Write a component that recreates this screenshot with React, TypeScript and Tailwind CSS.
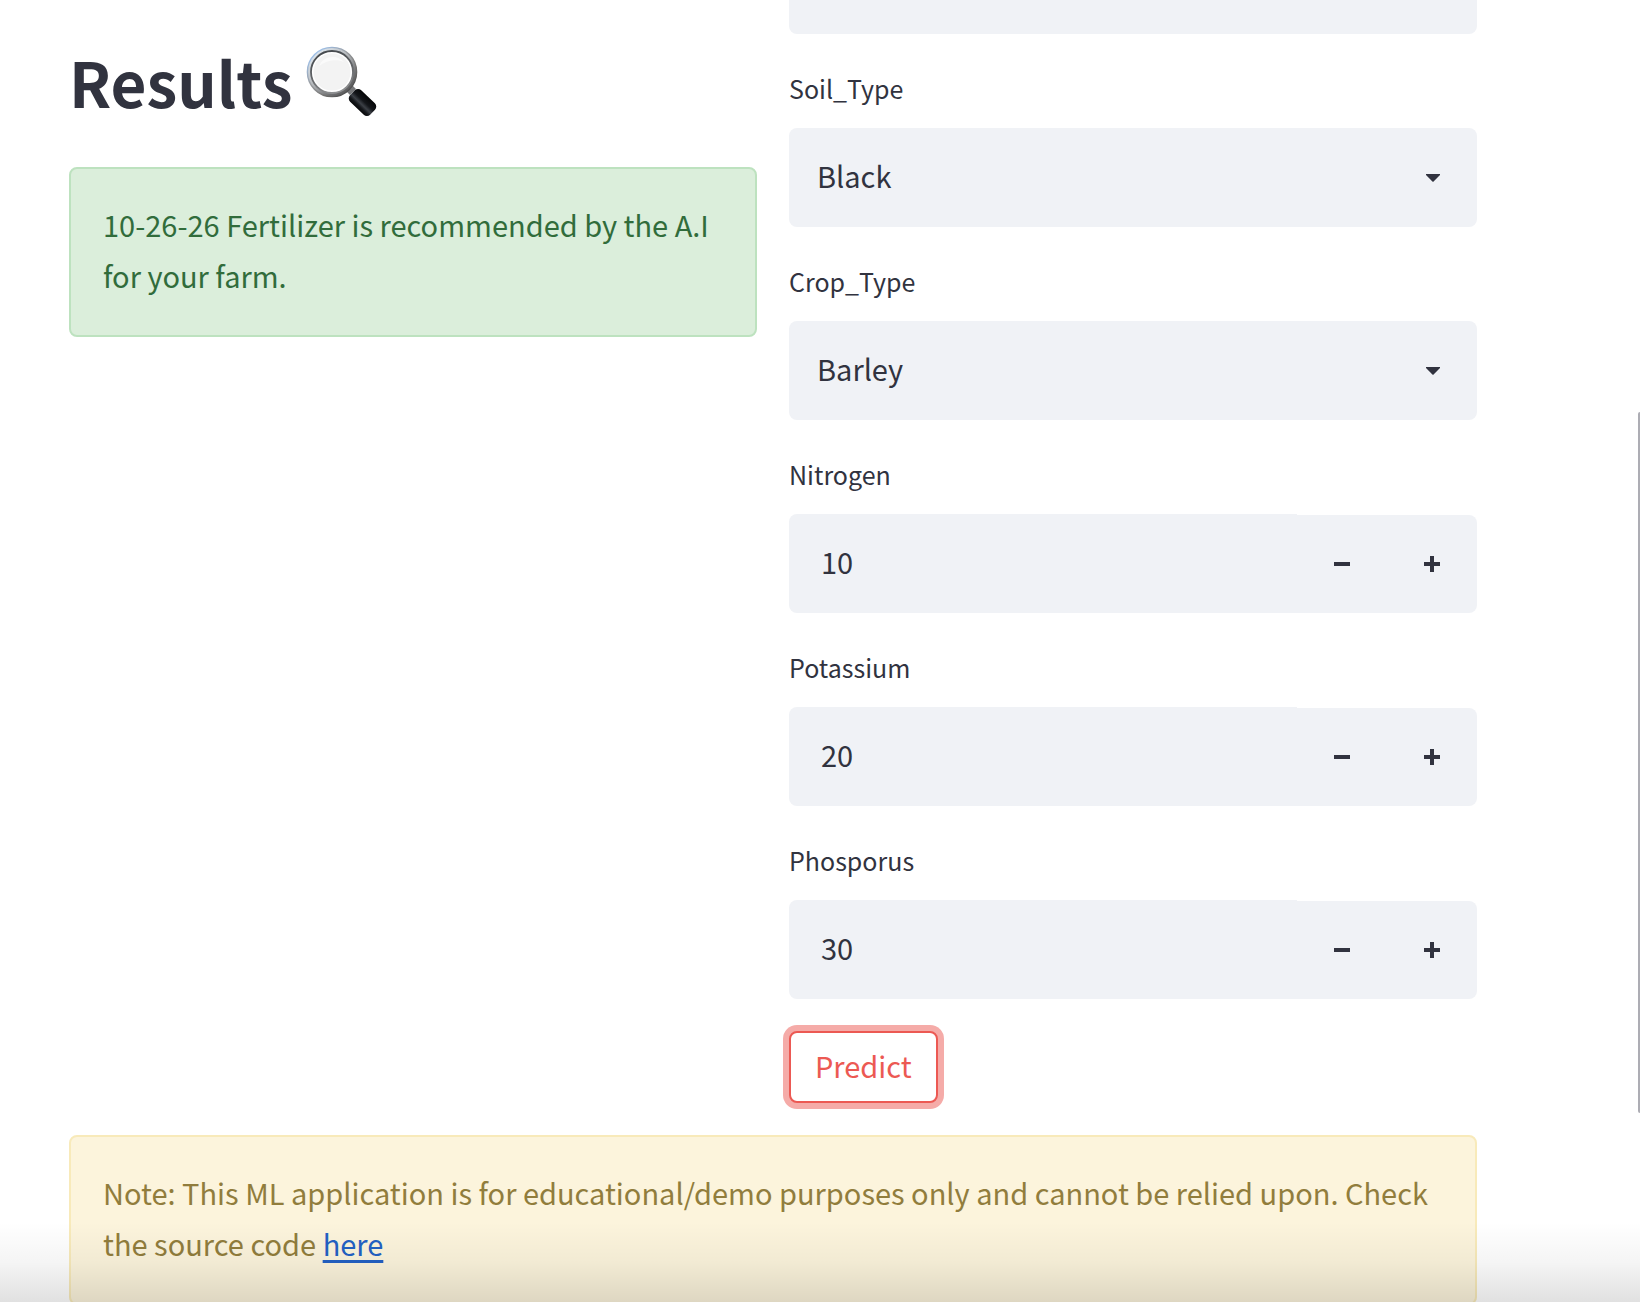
import React, { useId, useState } from "react";

function MagnifierIcon() {
  return (
    <svg viewBox="0 0 72 72" className="h-18 w-18 shrink-0" role="img" aria-label="Magnifying glass">
      <defs>
        <linearGradient id="rim" x1="0.15" y1="0.1" x2="0.85" y2="0.9">
          <stop offset="0" stopColor="#9fc2ec" />
          <stop offset="0.4" stopColor="#9a9da1" />
          <stop offset="0.7" stopColor="#777675" />
          <stop offset="1" stopColor="#4c4c4d" />
        </linearGradient>
        <linearGradient id="band" x1="0.15" y1="0.1" x2="0.85" y2="0.9">
          <stop offset="0" stopColor="#dfe8f0" />
          <stop offset="0.45" stopColor="#b4b7ba" />
          <stop offset="0.8" stopColor="#6f7072" />
          <stop offset="1" stopColor="#5b5b5c" />
        </linearGradient>
        <linearGradient id="rimInner" x1="0.3" y1="0" x2="0.6" y2="1">
          <stop offset="0" stopColor="#45494d" />
          <stop offset="0.5" stopColor="#606265" />
          <stop offset="1" stopColor="#909193" />
        </linearGradient>
        <linearGradient id="handle" x1="0" y1="0" x2="0" y2="1">
          <stop offset="0" stopColor="#050607" />
          <stop offset="0.4" stopColor="#14161a" />
          <stop offset="0.62" stopColor="#3c4046" />
          <stop offset="0.8" stopColor="#15171b" />
          <stop offset="1" stopColor="#07080a" />
        </linearGradient>
      </defs>
      <path d="M38 43 L44 49 L50 43 L44 37 Z" fill="#77787a" />
      <circle cx="26" cy="26" r="24.6" fill="url(#band)" stroke="url(#rim)" strokeWidth="1.4" />
      <circle cx="26" cy="26" r="21" fill="#fff" stroke="url(#rimInner)" strokeWidth="1.8" />
      <circle cx="26" cy="26" r="18.6" fill="#f3f3f3" />
      <path d="M13 20 C17 10 31 8 38 16 C30 13 21 14 13 20 Z" fill="#fafafa" />
      <rect x="42.5" y="48.5" width="28" height="16" rx="4.5" transform="rotate(44 56.5 56.5)" fill="url(#handle)" />
    </svg>
  );
}

function Label({ htmlFor, children }: { htmlFor: string; children: React.ReactNode }) {
  return (
    <label htmlFor={htmlFor} className="mb-[18px] block text-[25px] leading-[44px]">
      {children}
    </label>
  );
}

function SelectField({ label, options }: { label: string; options: string[] }) {
  const id = useId();
  return (
    <div>
      <Label htmlFor={id}>{label}</Label>
      <div className="relative">
        <select
          id={id}
          className="block h-[99px] w-full appearance-none rounded-lg bg-[#f0f2f6] pr-16 pb-1 pl-7 text-[29px] outline-none"
        >
          {options.map((o) => (
            <option key={o}>{o}</option>
          ))}
        </select>
        <svg
          viewBox="0 0 14 8"
          className="pointer-events-none absolute inset-y-0 right-[37px] my-auto h-2 w-[14px]"
          aria-hidden="true"
        >
          <path d="M0 0H14V1L7.6 7.6Q7 8 6.4 7.6L0 1Z" fill="#31333f" />
        </svg>
      </div>
    </div>
  );
}

function NumberField({ label, initial }: { label: string; initial: number }) {
  const id = useId();
  const [value, setValue] = useState(initial);
  return (
    <div>
      <Label htmlFor={id}>{label}</Label>
      <div className="flex h-[99px]">
        <input
          id={id}
          inputMode="numeric"
          value={value}
          onChange={(e) => setValue(Number(e.target.value) || 0)}
          className="min-w-0 flex-1 rounded-l-lg bg-[#f0f2f6] pb-1 pl-8 text-[29px] outline-none"
        />
        <button
          type="button"
          aria-label={`Decrease ${label}`}
          onClick={() => setValue(value - 1)}
          className="mt-px flex w-[90px] items-center justify-center bg-[#f0f2f6]"
        >
          <svg viewBox="0 0 16 16" className="h-4 w-4" fill="#31333f" aria-hidden="true">
            <path d="M0 6H16V10H0Z" />
          </svg>
        </button>
        <button
          type="button"
          aria-label={`Increase ${label}`}
          onClick={() => setValue(value + 1)}
          className="mt-px flex w-[90px] items-center justify-center rounded-r-lg bg-[#f0f2f6]"
        >
          <svg viewBox="0 0 16 16" className="h-4 w-4" fill="#31333f" aria-hidden="true">
            <path d="M6 0H10V6H16V10H10V16H6V10H0V6H6Z" />
          </svg>
        </button>
      </div>
    </div>
  );
}

export default function App() {
  return (
    <div className="relative h-screen overflow-hidden bg-white font-['Noto_Sans_CJK_JP','Noto_Sans',sans-serif] text-[#31333f]">
      <main className="flex flex-col gap-8 pr-[163px] pl-[69px]">
        <div className="grid grid-cols-2 gap-8">
          <section className="flex flex-col">
            <h1 className="mt-[30px] mb-[34px] flex items-center gap-[14px] text-[62px] leading-[103px] font-semibold">
              <span>Results</span>
              <MagnifierIcon />
            </h1>
            <div
              role="alert"
              className="rounded-lg border-2 border-[#bde2bf] bg-[#dbeedb] px-8 pt-[30px] pb-[34px] text-[29px] leading-[51px] text-[#316c3b]"
            >
              10-26-26 Fertilizer is recommended by the A.I for your farm.
            </div>
          </section>

          <form className="flex flex-col gap-8" onSubmit={(e) => e.preventDefault()}>
            <input aria-label="Moisture" className="block h-[34px] w-full rounded-b-lg bg-[#f0f2f6] outline-none" />
            <SelectField label="Soil_Type" options={["Black", "Clayey", "Loamy", "Red", "Sandy"]} />
            <SelectField label="Crop_Type" options={["Barley", "Cotton", "Maize", "Paddy", "Wheat"]} />
            <NumberField label="Nitrogen" initial={10} />
            <NumberField label="Potassium" initial={20} />
            <NumberField label="Phosporus" initial={30} />
            <button
              type="submit"
              className="h-[72px] self-start rounded-lg border-2 border-[#ec5953] bg-white px-6 pb-1 text-[29px] leading-[51px] text-[#ec5953] ring-6 ring-[#f5aba8]"
            >
              Predict
            </button>
          </form>
        </div>

        <div
          role="note"
          className="rounded-lg border-2 border-[#f8eaba] bg-[#fcf4dc] px-8 pt-[30px] pb-[34px] text-[29px] leading-[51px] text-[#917d3c]"
        >
          Note: This ML application is for educational/demo purposes only and cannot be relied upon. Check the source
          code{" "}
          <a href="#source" className="text-[#2361c4] underline decoration-3 underline-offset-4">
            here
          </a>
        </div>
      </main>

      <div className="pointer-events-none absolute inset-x-0 bottom-0 h-20 bg-linear-to-t from-black/12 via-black/4 to-transparent" />
      <div className="absolute top-[412px] right-0 h-[701px] w-[2px] rounded-l-sm bg-[#adadb4]" />
    </div>
  );
}
